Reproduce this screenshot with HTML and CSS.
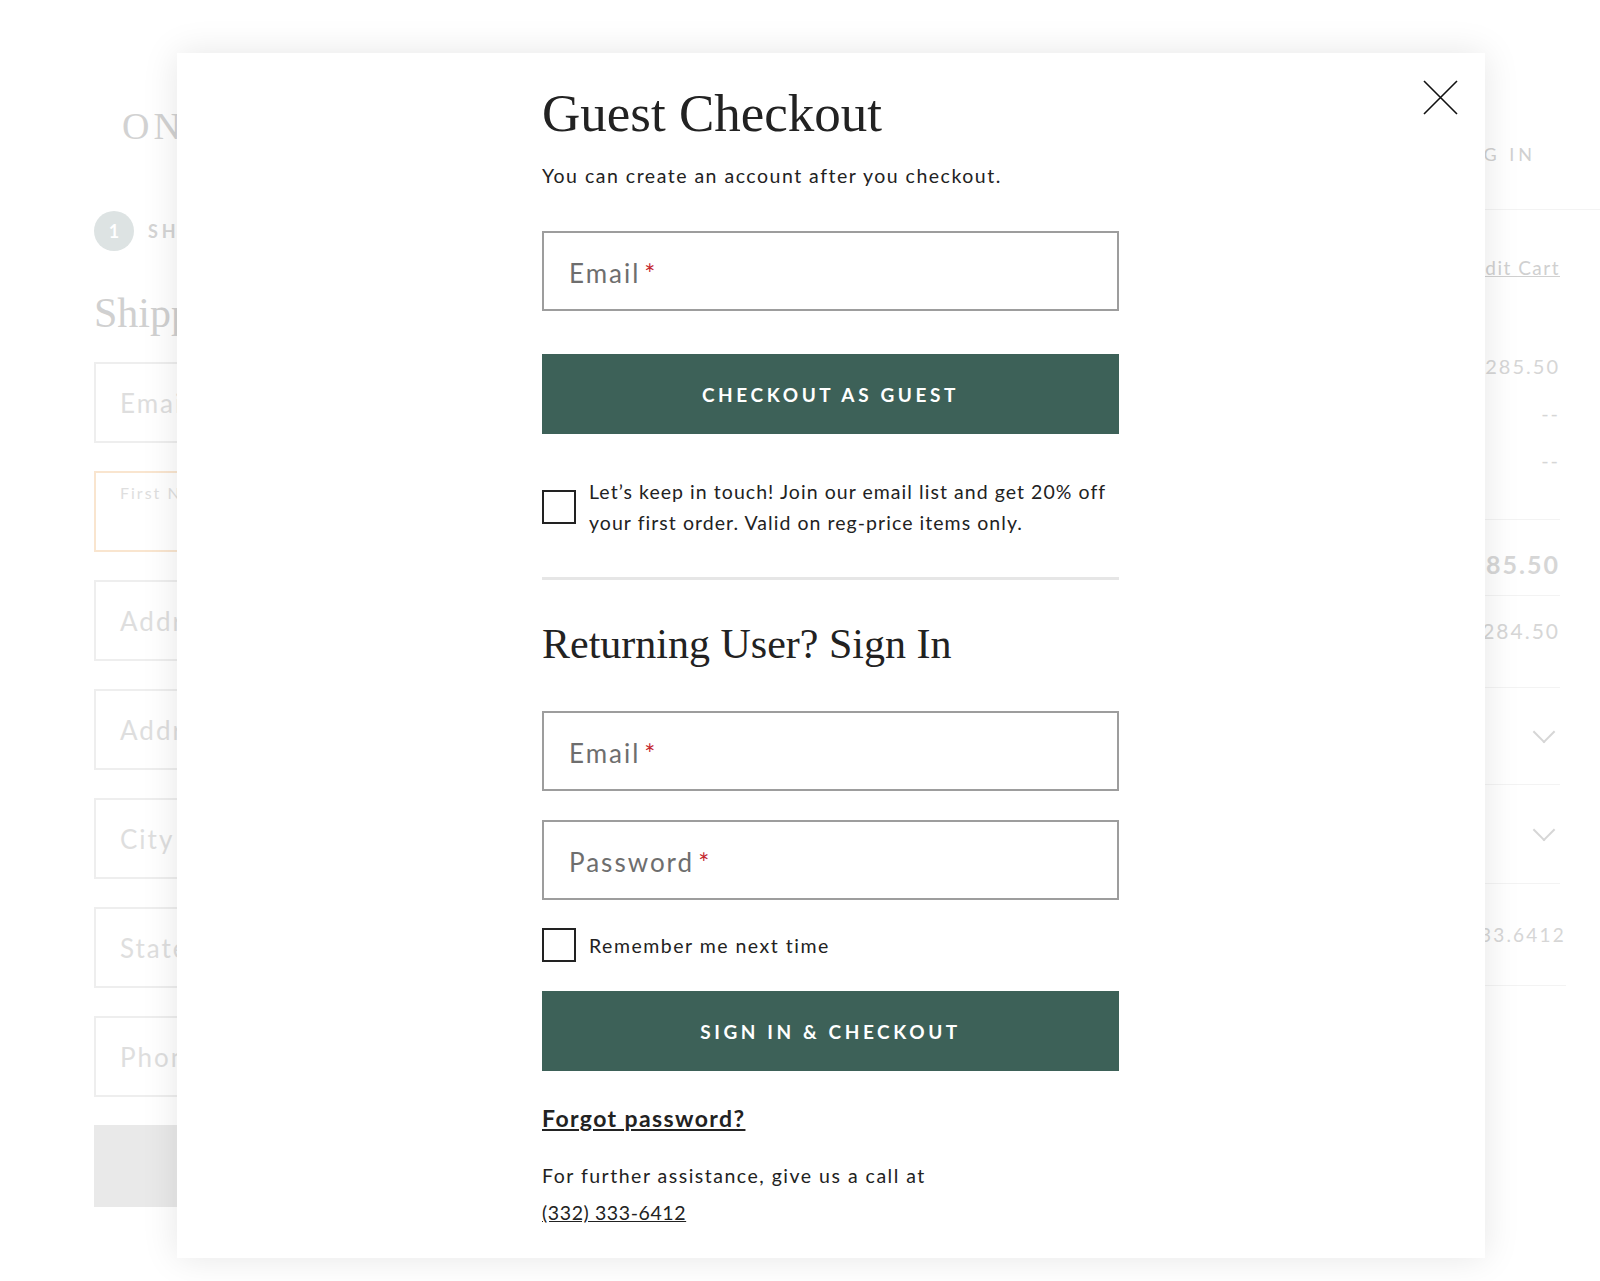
FILE: index.html
```html
<!DOCTYPE html>
<html>
<head>
    <title>Checkout</title>
    <link rel="stylesheet" href="styles.css">
</head>
<body>
    <!-- checkout page behind the modal -->
    <div class="page">
        <div class="main-col">
            <div class="logo">ONE</div>
            <div class="steps">
                <span class="step-num">1</span>
                <span class="step-name">SHIPPING</span>
            </div>
            <h2 class="page-title">Shipping</h2>
            <div class="bg-field">Email</div>
            <div class="bg-field bg-field-active"><span class="bg-small">First Name</span></div>
            <div class="bg-field">Address</div>
            <div class="bg-field">Address 2</div>
            <div class="bg-field">City</div>
            <div class="bg-field">State</div>
            <div class="bg-field">Phone</div>
            <div class="bg-button"></div>
        </div>

        <aside class="summary">
            <div class="login-link">LOG IN</div>
            <div class="summary-body">
                <div class="sum-block">
                    <a class="edit-cart">Edit Cart</a>
                    <div class="sum-line sum-sub">$285.50</div>
                    <div class="sum-line">--</div>
                    <div class="sum-line">--</div>
                </div>
                <div class="sum-row sum-total">$285.50</div>
                <div class="sum-row sum-paid">$284.50</div>
                <div class="sum-row sum-toggle"><span class="chev"></span></div>
                <div class="sum-row sum-toggle sum-toggle-2"><span class="chev"></span></div>
                <div class="sum-row sum-phone">332.333.6412</div>
            </div>
        </aside>
    </div>

    <!-- guest checkout modal -->
    <div class="modal">
        <button class="close-btn" type="button" aria-label="Close">
            <svg width="35" height="35" viewBox="0 0 35 35">
                <path d="M1 1 L34 34 M34 1 L1 34" stroke="#111" stroke-width="1.6" fill="none"/>
            </svg>
        </button>

        <div class="modal-content">
            <h1 class="title">Guest Checkout</h1>
            <p class="lead">You can create an account after you checkout.</p>

            <label class="field field-first">
                <span class="field-label">Email<span class="req">*</span></span>
                <input type="email">
            </label>

            <button class="btn btn-guest" type="button">CHECKOUT AS GUEST</button>

            <label class="check check-optin">
                <span class="box"></span>
                <span class="check-text">Let’s keep in touch! Join our email list and get 20% off your first order. Valid on reg-price items only.</span>
            </label>

            <hr class="divider">

            <h2 class="subtitle">Returning User? Sign In</h2>

            <label class="field field-login">
                <span class="field-label">Email<span class="req">*</span></span>
                <input type="email">
            </label>

            <label class="field field-pass">
                <span class="field-label">Password<span class="req">*</span></span>
                <input type="password">
            </label>

            <label class="check check-remember">
                <span class="box"></span>
                <span class="check-text">Remember me next time</span>
            </label>

            <button class="btn btn-signin" type="button">SIGN IN &amp; CHECKOUT</button>

            <a class="forgot" href="#">Forgot password?</a>

            <p class="help">For further assistance, give us a call at<br><a href="#">(332) 333-6412</a></p>
        </div>
    </div>
</body>
</html>
```

FILE: styles.css
```css
body {
    margin: 0;
    background-color: #fff;
    font-family: Lato, "Open Sans", sans-serif;
    color: #222;
    overflow: hidden;
}

/* ---- Page behind the modal (faded) ---- */
.page {
    display: flex;
    justify-content: space-between;
    height: 1281px;
}

.main-col {
    width: 720px;
    padding-left: 94px;
}

.logo {
    font-family: "Liberation Serif", serif;
    font-size: 38px;
    letter-spacing: 4px;
    color: #d2d2d2;
    margin: 105px 0 0 28px;
    line-height: 42px;
}

.steps {
    display: flex;
    align-items: center;
    margin-top: 64px;
}

.step-num {
    width: 40px;
    height: 40px;
    border-radius: 50%;
    background-color: #dde3e3;
    color: #fff;
    font-size: 18px;
    font-weight: bold;
    display: flex;
    align-items: center;
    justify-content: center;
}

.step-name {
    margin-left: 14px;
    font-size: 18px;
    font-weight: bold;
    letter-spacing: 4px;
    color: #d4d4d4;
}

.page-title {
    font-family: "Liberation Serif", serif;
    font-weight: normal;
    font-size: 42px;
    color: #d0d0d0;
    margin: 38px 0 0;
    line-height: 48px;
}

.bg-field {
    box-sizing: border-box;
    height: 81px;
    margin-top: 28px;
    border: 2px solid #eeeeee;
    padding-left: 24px;
    display: flex;
    align-items: center;
    font-size: 26px;
    letter-spacing: 2px;
    color: #dedede;
}

.main-col .page-title + .bg-field {
    margin-top: 25px;
}

.bg-field-active {
    border-color: #f9e5cf;
    align-items: flex-start;
}

.bg-small {
    font-size: 16px;
    margin-top: 10px;
    letter-spacing: 2px;
}

.bg-button {
    height: 82px;
    margin-top: 28px;
    background-color: #e9e9e9;
}

.summary {
    width: 600px;
    display: flex;
    flex-direction: column;
    align-items: flex-end;
}

.login-link {
    margin: 142px 64px 0 0;
    font-size: 18px;
    letter-spacing: 4px;
    color: #d0d0d0;
    line-height: 24px;
}

.summary-body {
    align-self: stretch;
    margin-top: 43px;
    border-top: 1px solid #f3f3f3;
    padding-right: 40px;
}

.sum-block {
    display: flex;
    flex-direction: column;
    align-items: flex-end;
    padding: 46px 0 35px;
    border-bottom: 1px solid #f3f3f3;
    color: #d6d6d6;
}

.edit-cart {
    font-size: 19px;
    letter-spacing: 1.5px;
    text-decoration: underline;
    color: #d0d0d0;
}

.sum-line {
    font-size: 20px;
    letter-spacing: 2px;
    line-height: 47px;
}

.sum-sub {
    margin-top: 64px;
}

.sum-row {
    display: flex;
    justify-content: flex-end;
    align-items: center;
    border-bottom: 1px solid #f3f3f3;
    color: #d6d6d6;
    letter-spacing: 2px;
}

.sum-total {
    box-sizing: border-box;
    height: 76px;
    padding-top: 12px;
    font-size: 25px;
    font-weight: bold;
}

.sum-paid {
    box-sizing: border-box;
    height: 92px;
    align-items: flex-start;
    padding-top: 20px;
    line-height: 30px;
    font-size: 21px;
}

.sum-toggle {
    height: 96px;
}

.sum-toggle-2 {
    height: 98px;
}

.chev {
    width: 14px;
    height: 14px;
    border-right: 2px solid #d6d6d6;
    border-bottom: 2px solid #d6d6d6;
    transform: rotate(45deg);
    margin: -8px 8px 0 0;
}

.sum-phone {
    height: 101px;
    font-size: 19px;
    letter-spacing: 2.2px;
    margin-right: -6px;
}

/* ---- Modal ---- */
.modal {
    position: absolute;
    left: 177px;
    top: 53px;
    width: 1308px;
    height: 1205px;
    background-color: #fff;
    box-shadow: 0 0 34px rgba(0, 0, 0, 0.10);
}

.close-btn {
    position: absolute;
    top: 27px;
    right: 27px;
    padding: 0;
    border: none;
    background: none;
    cursor: pointer;
    line-height: 0;
}

.modal-content {
    width: 577px;
    margin-left: 365px;
    padding-top: 29px;
    display: flex;
    flex-direction: column;
    align-items: flex-start;
}

.title {
    font-family: "Liberation Serif", serif;
    font-weight: normal;
    font-size: 53px;
    line-height: 62px;
    color: #222;
    margin: 0;
}

.lead {
    margin: 18px 0 0;
    font-size: 19.5px;
    line-height: 28px;
    letter-spacing: 1.5px;
}

/* Text fields with floating label */
.field {
    position: relative;
    align-self: stretch;
    display: block;
    height: 80px;
}

.field input {
    box-sizing: border-box;
    width: 100%;
    height: 80px;
    border: 2px solid #9d9d9d;
    background: #fff;
    margin: 0;
    outline: none;
}

.field-label {
    position: absolute;
    left: 27px;
    top: 27px;
    font-size: 26px;
    line-height: 30px;
    letter-spacing: 2px;
    color: #6e6e6e;
}

.req {
    color: #c4262e;
    font-size: 26px;
    margin-left: 4px;
    vertical-align: top;
    position: relative;
    top: 1px;
}

.field-first { margin-top: 41px; }
.field-login { margin-top: 42px; }
.field-pass { margin-top: 29px; }

/* Buttons */
.btn {
    align-self: stretch;
    height: 80px;
    border: none;
    background-color: #3d6158;
    color: #fff;
    font-family: Lato, sans-serif;
    font-size: 19px;
    font-weight: bold;
    letter-spacing: 3.6px;
    cursor: pointer;
}

.btn-guest { margin-top: 43px; }
.btn-signin { margin-top: 29px; }

/* Checkboxes */
.check {
    display: flex;
    align-items: flex-start;
    cursor: pointer;
}

.box {
    flex: none;
    box-sizing: border-box;
    width: 34px;
    height: 34px;
    border: 2px solid #222;
    margin-right: 13px;
}

.check-text {
    font-size: 19.5px;
    line-height: 30.5px;
    letter-spacing: 1.5px;
}

.check-optin {
    margin-top: 43px;
}

.check-optin .check-text {
    letter-spacing: 1.05px;
}

.check-optin .box {
    margin-top: 13px;
}

.check-remember {
    margin-top: 28px;
    align-items: center;
}

.check-remember .check-text {
    margin-top: 3px;
}

.divider {
    align-self: stretch;
    margin: 39px 0 0;
    border: none;
    height: 3px;
    background-color: #e6e6e6;
}

.subtitle {
    font-family: "Liberation Serif", serif;
    font-weight: normal;
    font-size: 42px;
    line-height: 50px;
    color: #222;
    margin: 39px 0 0;
}

.forgot {
    margin-top: 32px;
    font-size: 23px;
    line-height: 30px;
    font-weight: bold;
    letter-spacing: 1.4px;
    color: #222;
    text-decoration: underline;
}

.help {
    margin: 25px 0 0;
    font-size: 19.5px;
    line-height: 36.5px;
    letter-spacing: 1.5px;
}

.help a {
    color: #222;
    letter-spacing: 0.6px;
    text-decoration: underline;
}
```
